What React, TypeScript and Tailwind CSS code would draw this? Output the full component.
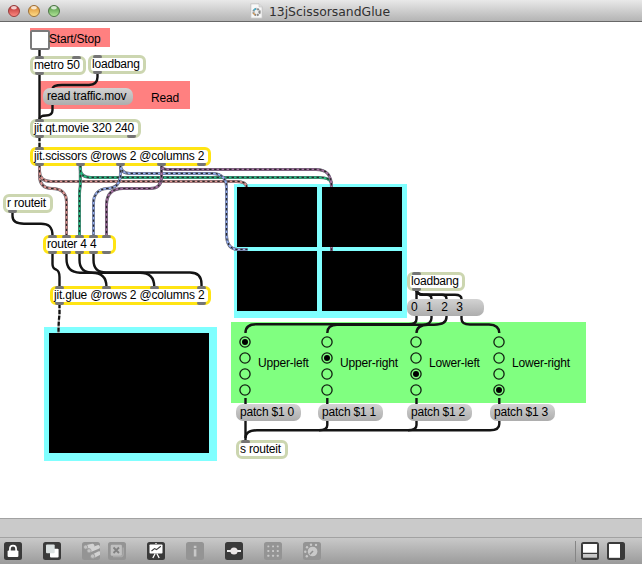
import React from "react";

const SANS = "font-['Liberation_Sans',Arial,sans-serif] text-[12px] tracking-[-0.2px] text-black whitespace-pre";

/* A patcher object box with its inlets and outlets (offsets from the box's left edge). */
function Obj({ at, label, yellow, ins, outs }: { at: string; label: string; yellow?: boolean; ins: string[]; outs: string[] }) {
  return (
    <div
      className={`absolute h-[19px] rounded-[6px] border-[3px] bg-white pl-px leading-[13px] ${SANS} ${at} ${
        yellow ? "border-[#ffe414]" : "border-[#ccd6b0]"
      }`}
    >
      {label}
      {ins.map((p) => (
        <span key={"i" + p} className={`absolute -top-[3px] h-[3px] w-[9px] rounded-t-[2px] rounded-b-[1px] bg-[#757575] ${p}`} />
      ))}
      {outs.map((p) => (
        <span key={"o" + p} className={`absolute -bottom-[3px] h-[3px] w-[9px] rounded-t-[1px] rounded-b-[2px] bg-[#757575] ${p}`} />
      ))}
    </div>
  );
}

function Msg({ at, label }: { at: string; label: string }) {
  return (
    <div className={`absolute h-[17px] rounded-[7px] bg-linear-to-b from-[#d3d3d3] to-[#adadad] pl-[4px] leading-[17px] ${SANS} ${at}`}>
      {label}
    </div>
  );
}

function Label({ at, children }: { at: string; children: React.ReactNode }) {
  return <div className={`absolute leading-[14px] ${SANS} ${at}`}>{children}</div>;
}

function Radio({ at, label, on }: { at: string; label: string; on: number }) {
  return (
    <div className={`absolute top-[314px] flex items-center gap-[7px] ${at}`}>
      <div className="flex flex-col gap-[4px]">
        {[0, 1, 2, 3].map((i) => (
          <svg key={i} className="block size-[12px]" viewBox="0 0 12 12">
            <circle cx="6" cy="6" r="5.1" fill="none" stroke="#102010" strokeWidth="1.3" />
            {i === on && <circle cx="6" cy="6" r="3" fill="#000" />}
          </svg>
        ))}
      </div>
      <span className={`relative top-[-3px] leading-[14px] ${SANS}`}>{label}</span>
    </div>
  );
}

const wires = [
  "M39.5 49V57",
  "M39.5 74V120",
  "M97.5 73V77Q97.5 84.5 89 85H62Q52.5 85 52.5 89",
  "M52.5 104V110Q52.5 115.5 46 115.5Q40 115.5 39.5 119",
  "M12.5 212V216C12.5 222 17 223.7 24 223.7H41C48 223.7 52.5 226 52.5 236",
  "M52.5 253V264Q52.5 268.5 56 269.5Q59.5 271 59.5 277V287",
  "M66.5 253V259C66.5 268 71 272.5 80 272.7H92Q106.5 272.7 106.5 287",
  "M79.5 253V260C79.5 269 85 272.7 93 272.7H140Q154.3 272.7 154.3 287",
  "M93.5 253V260C93.5 268 98 272.5 106 272.5H190Q201.5 272.5 201.5 284V287",
  "M416.5 290V300",
  "M416.5 290Q417 294.5 423 294.7H427Q431.5 294.7 431.5 299",
  "M416.5 290Q417 294.5 423 294.7H442Q446.5 294.7 446.5 299",
  "M416.5 290Q417 294.5 423 294.7H455Q461.5 294.7 461.5 299",
  "M416.5 316V319Q416.5 324.3 409 324.3H256Q245.5 324.3 245.5 333",
  "M431.5 316V318Q431.5 324.7 422 324.7H337Q327.3 324.7 327.3 333",
  "M446.5 316V317Q446.5 324.7 434 324.7H428Q416.5 325 416.5 333",
  "M461.5 316V319Q461.5 324.3 470 324.5H489Q499.3 325 499.3 333",
  "M245.5 398V405M327.3 398V405M416.5 398V405M499.3 398V405",
  "M245.5 420V441",
  "M327.3 420V425Q327.3 430.3 319 430.3",
  "M416.5 420V425Q416.5 430.3 408 430.3",
  "M499.3 420V424Q499.3 430.3 490 430.3H257Q245.5 430.3 245.5 438",
];

const matrixWires: [string, string][] = [
  ["#de9590", "M39.5 165V175C39.5 184 44 188.5 52 188.5C61 188.5 66.5 193 66.5 202V236"],
  ["#de9590", "M39.5 165V171Q39.5 181.4 51 181.4H236Q246.5 181.4 246.5 187"],
  ["#22c484", "M80.3 165V186Q79.5 190 79.5 194V236"],
  ["#22c484", "M80.3 165V169Q80.3 177.4 91 177.4H319Q330 177.4 331.5 183"],
  ["#96aff0", "M120.5 165V173C120.5 184 116 188.3 107 188.5C98 189 93.5 195 93.5 203V236"],
  ["#96aff0", "M120.5 165Q120.5 173.4 130 173.4H212C222 173.4 226.5 179 226.5 187V234C226.5 245 231 249.4 238 249.4H247.5"],
  ["#a56fa0", "M161.5 165V177Q161.5 188.5 150 188.5H123C111 188.5 106.5 195 106.5 205V236"],
  ["#a56fa0", "M161.5 165Q161.5 169.4 167 169.4H316C327 169.4 331.5 175 331.5 187V251"],
];

function Lights() {
  return (
    <svg className="block h-[22px] w-[70px]" viewBox="0 0 70 22">
      <defs>
        {[["lr", "#b52a2a", "#ff8d85"], ["lo", "#d98a2c", "#ffdf8c"], ["lg", "#4b9040", "#b4e89a"]].map(([id, a, b]) => (
          <linearGradient key={id} id={id} x1="0" y1="0" x2="0" y2="1">
            <stop offset="0" stopColor={a} />
            <stop offset="1" stopColor={b} />
          </linearGradient>
        ))}
      </defs>
      {[["lr", 14, "#8f3434"], ["lo", 34, "#94672f"], ["lg", 54, "#456d3e"]].map(([id, x, s]) => (
        <g key={id}>
          <circle cx={x} cy="11" r="5.5" fill={`url(#${id})`} stroke={s as string} strokeWidth="0.9" />
          <ellipse cx={x} cy="7.8" rx="2.9" ry="1.7" fill="#fff" opacity=".75" />
        </g>
      ))}
    </svg>
  );
}

function Tool({ dim, children }: { dim?: boolean; children?: React.ReactNode }) {
  return (
    <svg className={`block size-[18px] shrink-0 rounded-[2.5px] ${dim ? "bg-[#949494]" : "bg-[#3a3a3a]"}`} viewBox="0 0 18 18">
      {children}
    </svg>
  );
}

export default function App() {
  return (
    <div className="flex h-[564px] w-[642px] flex-col overflow-hidden bg-white">
      <header className="relative flex h-[22px] shrink-0 items-center border-b border-[#686868] bg-linear-to-b from-[#e9e9e9] to-[#b4b4b4]">
        <Lights />
        <div className="absolute inset-x-0 top-0 flex h-[22px] items-center justify-center gap-[6px] pr-[2px]">
          <svg className="h-[16px] w-[13px]" viewBox="0 0 13 16">
            <path d="M.8.8H9L12.2 4V15.2H.8Z" fill="#f8f8f8" stroke="#bcbcbc" strokeWidth=".8" />
            <path d="M9 .8V4H12.2" fill="#ddd" stroke="#c4c4c4" strokeWidth=".6" />
            <circle cx="6.5" cy="9" r="3.1" fill="none" stroke="#888" strokeWidth="2.2" strokeDasharray="1.7 .8" />
            <path d="M3.8 7.4A3.1 3.1 0 0 1 6 5.9" fill="none" stroke="#3cb6d7" strokeWidth="1.3" />
            <path d="M3.5 9.8A3.1 3.1 0 0 0 5 11.7" fill="none" stroke="#dc9745" strokeWidth="1.2" />
            <circle cx="6.5" cy="9" r="1.5" fill="#eee" />
          </svg>
          <span className="relative top-px font-['DejaVu_Sans',sans-serif] text-[12.4px] leading-[20px] text-[#303030]">13jScissorsandGlue</span>
        </div>
      </header>

      <main className="relative h-[496px] shrink-0 overflow-hidden bg-white">
        <div className="absolute left-[30px] top-[6px] h-[19px] w-[80px] bg-[#ff8080]" />
        <div className="absolute left-[40px] top-[59px] h-[28px] w-[150px] bg-[#ff8080]" />
        <div className="absolute left-[234px] top-[162px] h-[134px] w-[173px] bg-[#80ffff]" />
        <div className="absolute left-[44px] top-[305px] h-[134px] w-[173px] bg-[#80ffff]" />
        <div className="absolute left-[231px] top-[300px] h-[81px] w-[355px] bg-[#80ff80]" />

        <svg className="absolute left-0 top-0 h-[496px] w-[642px]" viewBox="0 22 642 496" fill="none">
          {wires.map((d) => (
            <path key={d} d={d} stroke="#141414" strokeWidth="2.4" />
          ))}
          <path d="M39.5 137V148M59.5 304V314Q58.5 322 58.5 334" stroke="#aaa" strokeWidth="2.2" />
          <path d="M39.5 137V148M59.5 304V314Q58.5 322 58.5 334" stroke="#111" strokeWidth="2.2" strokeDasharray="4 2" />
          {matrixWires.map(([c, d]) => (
            <g key={d}>
              <path d={d} stroke="#5a5a66" strokeWidth="3" />
              <path d={d} stroke={c} strokeWidth="2" />
              <path d={d} stroke="#272727" strokeWidth="1.2" strokeDasharray="2.4 2.6" />
            </g>
          ))}
        </svg>

        <div className="absolute left-[237px] top-[165px] grid grid-cols-2 gap-x-[5px] gap-y-[4px]">
          <div className="h-[60px] w-[80px] bg-black" />
          <div className="h-[60px] w-[80px] bg-black" />
          <div className="h-[60px] w-[80px] bg-black" />
          <div className="h-[60px] w-[80px] bg-black" />
        </div>
        <div className="absolute left-[49px] top-[311px] h-[120px] w-[160px] bg-black" />

        <div className="absolute left-[30px] top-[8px] size-[20px] rounded-[2px] border-2 border-[#7b7b7b] bg-white" />
        <Label at="left-[49px] top-[10px]">Start/Stop</Label>
        <Label at="left-[151px] top-[69px]">Read</Label>

        <Obj at="left-[30px] top-[34px] w-[56px]" label="metro 50" ins={["left-[2px]", "left-[39px]"]} outs={["left-[2px]"]} />
        <Obj at="left-[88px] top-[33px] w-[58px]" label="loadbang" ins={["left-[2px]"]} outs={["left-[2px]"]} />
        <Obj at="left-[30px] top-[97px] w-[111px]" label="jit.qt.movie 320 240" ins={["left-[2px]"]} outs={["left-[2px]", "left-[94px]"]} />
        <Obj
          yellow
          at="left-[30px] top-[125px] w-[181px]"
          label="jit.scissors @rows 2 @columns 2"
          ins={["left-[2px]"]}
          outs={["left-[2px]", "left-[43px]", "left-[83px]", "left-[124px]", "left-[164px]"]}
        />
        <Obj at="left-[3px] top-[172px] w-[50px]" label="r routeit" ins={[]} outs={["left-[2px]"]} />
        <Obj
          yellow
          at="left-[43px] top-[213px] w-[73px]"
          label="router 4 4"
          ins={["left-[2px]", "left-[16px]", "left-[29px]", "left-[43px]", "left-[56px]"]}
          outs={["left-[2px]", "left-[16px]", "left-[29px]", "left-[43px]", "left-[56px]"]}
        />
        <Obj
          yellow
          at="left-[50px] top-[264px] w-[161px]"
          label="jit.glue @rows 2 @columns 2"
          ins={["left-[2px]", "left-[49px]", "left-[97px]", "left-[144px]"]}
          outs={["left-[2px]", "left-[144px]"]}
        />
        <Obj at="left-[407px] top-[250px] w-[58px]" label="loadbang" ins={["left-[2px]"]} outs={["left-[2px]"]} />
        <Obj at="left-[236px] top-[418px] w-[52px]" label="s routeit" ins={["left-[2px]"]} outs={[]} />

        <Msg at="left-[43px] top-[66px] w-[90px]" label="read traffic.mov" />
        <div className="absolute left-[407px] top-[277px] flex h-[17px] w-[77px] gap-[8.4px] rounded-[7px] bg-linear-to-b from-[#d3d3d3] to-[#adadad] pl-[4px] font-['Liberation_Sans',Arial,sans-serif] text-[12px] leading-[17px] text-black">
          <span>0</span>
          <span>1</span>
          <span>2</span>
          <span>3</span>
        </div>
        <Msg at="left-[236px] top-[382px] w-[65px]" label="patch $1 0" />
        <Msg at="left-[318px] top-[382px] w-[65px]" label="patch $1 1" />
        <Msg at="left-[407px] top-[382px] w-[65px]" label="patch $1 2" />
        <Msg at="left-[490px] top-[382px] w-[65px]" label="patch $1 3" />

        <Radio at="left-[239px]" label="Upper-left" on={0} />
        <Radio at="left-[321px]" label="Upper-right" on={1} />
        <Radio at="left-[410px]" label="Lower-left" on={2} />
        <Radio at="left-[493px]" label="Lower-right" on={3} />
      </main>

      <div className="h-[19px] shrink-0 border-t border-[#a2a2a2] bg-[#cacaca]" />
      <footer className="flex h-[27px] shrink-0 items-center justify-between border-t border-[#a2a2a2] bg-linear-to-b from-[#c9c9c9] to-[#9b9b9b] pb-px pl-[4px] pr-[17px] pt-px">
        <div className="flex gap-[21px]">
          <Tool>
            <path d="M5.9 9V6.7a3.1 3.1 0 0 1 6.2 0V9" fill="none" stroke="#fff" strokeWidth="1.7" />
            <rect x="3.6" y="8.6" width="10.8" height="6.4" rx="1" fill="#fff" />
          </Tool>
          <Tool>
            <rect x="7" y="6.7" width="8.6" height="8.8" rx="1" fill="#fff" />
            <rect x="3" y="2.5" width="8.7" height="8.7" rx="1" fill="#dce2e2" />
          </Tool>
          <div className="flex gap-[8px]">
            <Tool dim>
              <g stroke="#d2d2d2" strokeWidth="3.8" strokeLinecap="round">
                <path d="M4 5L10.5 3.6M7.5 8.6L16 5M11.2 14.2L17 11.2" />
              </g>
              <g fill="#c3c3c3" stroke="#989898" strokeWidth=".8">
                <circle cx="3.6" cy="5.1" r="2.1" />
                <circle cx="7" cy="8.8" r="2.1" />
                <circle cx="10.6" cy="14.2" r="2.2" />
              </g>
            </Tool>
            <Tool dim>
              <path d="M5 14.7H12.5Q15.2 14.7 15.2 12V5.5" fill="none" stroke="#aaa" strokeWidth="1.3" />
              <rect x="2.7" y="2.7" width="11.2" height="11" rx="1.2" fill="#c0c0c0" />
              <path d="M5.5 5.5L11 11M11 5.5L5.5 11" stroke="#828282" strokeWidth="1.9" />
            </Tool>
          </div>
          <Tool>
            <rect x="2.5" y="2.5" width="13" height="9" rx=".8" fill="#fff" />
            <path d="M4.5 9L7.5 6.6L9.5 7.6L13.8 4.3" fill="none" stroke="#3a3a3a" strokeWidth="1.1" />
            <path d="M9 2V1M8.2 11.5L5.8 16M9.8 11.5L12.2 16" stroke="#fff" strokeWidth="1.3" />
          </Tool>
          <Tool dim>
            <path d="M7.8 3.8h2.6v2.3H7.8ZM7.8 7.3h2.6v7.2H7.8Z" fill="#c8c8c8" />
          </Tool>
          <Tool>
            <path d="M2 9H16" stroke="#eee" strokeWidth="2" />
            <circle cx="9" cy="9" r="3.6" fill="#eae6e6" />
          </Tool>
          <Tool dim>
            <g fill="#c9c9c9">
              {[4.3, 9, 13.7].map((y) => [4.3, 9, 13.7].map((x) => <rect key={`${x}-${y}`} x={x - 0.9} y={y - 0.9} width="1.9" height="1.9" rx=".5" />))}
            </g>
          </Tool>
          <Tool dim>
            <circle cx="9.6" cy="9.5" r="4.8" fill="#c9c9c9" />
            <path d="M6.9 12.3L10 9" stroke="#8e8e8e" strokeWidth="1.5" />
            <g fill="#c9c9c9">
              <circle cx="3.8" cy="14.3" r="1.2" />
              <circle cx="2.3" cy="9.7" r="1.2" />
              <circle cx="4" cy="5.3" r="1.2" />
              <circle cx="8" cy="2.7" r="1.2" />
              <circle cx="13" cy="2.9" r="1.2" />
            </g>
          </Tool>
        </div>
        <div className="flex items-center">
          <div className="mr-[5px] h-[21px] w-px bg-[#858585]" />
          <div className="flex gap-[8px]">
            <Tool>
              <rect x="2" y="2" width="14" height="8.8" rx=".4" fill="#fff" />
              <rect x="2" y="12" width="14" height="3.7" fill="#c8c8c8" />
            </Tool>
            <Tool>
              <rect x="2" y="2" width="11" height="13.8" fill="#fff" />
            </Tool>
          </div>
        </div>
      </footer>
    </div>
  );
}
